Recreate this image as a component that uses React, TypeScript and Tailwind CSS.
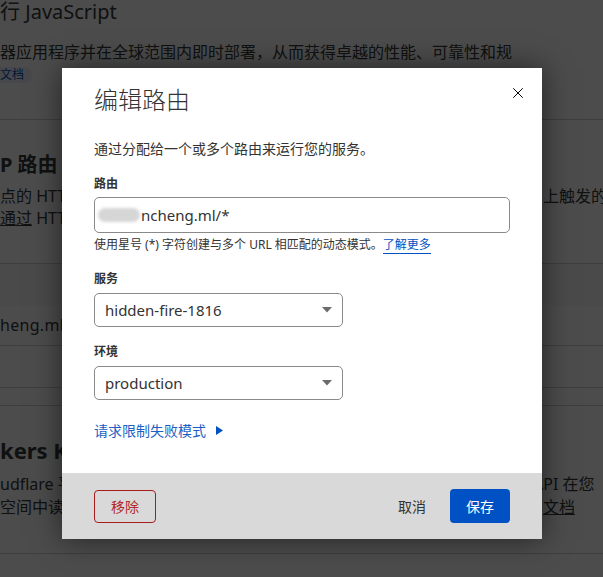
import { X } from "lucide-react";

const font = { fontFamily: '"Noto Sans", "Noto Sans CJK SC", sans-serif' };

function BgRow({
  h,
  left,
  right,
  rightW = "w-[60px]",
  className = "",
}: {
  h: string;
  left?: React.ReactNode;
  right?: React.ReactNode;
  rightW?: string;
  className?: string;
}) {
  return (
    <div className={`flex items-center whitespace-nowrap ${h} ${className}`}>
      <div className="min-w-0 flex-1 overflow-hidden">{left}</div>
      {right && <div className={`${rightW} shrink-0 overflow-hidden`}>{right}</div>}
    </div>
  );
}

function Background() {
  return (
    <div className="flex flex-col text-[16px] text-[#36393a]">
      <BgRow h="h-[24px]" left={<span className="text-[20px]">行 JavaScript</span>} />
      <div className="h-[16px]" />
      <BgRow h="h-[24px]" left={<span>器应用程序并在全球范围内即时部署，从而获得卓越的性能、可靠性和规</span>} />
      <div className="h-[3px]" />
      <div className="flex h-[16px]">
        <span className="rounded-r-full bg-[#eef2fa] pr-[8px] text-[12px] leading-[16px] text-[#0051c3]">文档</span>
      </div>
      <div className="h-[36px]" />
      <div className="border-t border-[#cfcfcf]" />
      <div className="h-[33px]" />
      <BgRow h="h-[24px]" left={<span className="text-[20px] font-bold">P 路由</span>} />
      <div className="h-[8px]" />
      <BgRow h="h-[22px]" left={<span>点的 HTTP</span>} right={<span>上触发的</span>} />
      <BgRow h="h-[22px]" left={<span><span className="underline">通过</span> HTTP</span>} />
      <div className="h-[34px]" />
      <div className="border-t border-[#cfcfcf]" />
      <div className="h-[41px] bg-[#f9f9f9]" />
      <BgRow h="h-[40px]" left={<span className="tracking-[0.3px]">heng.ml/</span>} />
      <div className="border-t border-[#cfcfcf]" />
      <div className="h-[41px]" />
      <div className="border-t border-[#cfcfcf]" />
      <div className="h-[17px]" />
      <div className="border-t border-[#cfcfcf]" />
      <div className="h-[30px]" />
      <BgRow h="h-[28px]" left={<span className="text-[22px] font-bold">kers KV</span>} />
      <div className="h-[9px]" />
      <BgRow
        h="h-[22px]"
        left={<span>udflare 平</span>}
        right={<span>API 在您</span>}
        rightW="w-[70px]"
      />
      <BgRow
        h="h-[24px]"
        left={<span>空间中读</span>}
        right={<span className="underline">文档</span>}
      />
      <div className="h-[34px]" />
      <div className="border-t border-[#cfcfcf]" />
    </div>
  );
}

function Select({ value, w }: { value: string; w: string }) {
  return (
    <div
      className={`mt-[6px] flex h-[34px] ${w} items-center justify-between rounded-[5px] border border-[#8a8a8a] pl-[10px] pr-[10px]`}
    >
      <span className="text-[15px] text-[#333]">{value}</span>
      <svg width="10" height="6" viewBox="0 0 10 6">
        <path d="M0 0h10L5 5.5z" fill="#6b6b6b" />
      </svg>
    </div>
  );
}

function Label({ children, mt }: { children: React.ReactNode; mt: string }) {
  return <div className={`${mt} text-[12px] font-semibold leading-[16px] text-[#333]`}>{children}</div>;
}

function Modal() {
  return (
    <div className="relative flex h-[471px] w-[480px] flex-col bg-white shadow-[0_0_28px_rgba(0,0,0,0.55)]">
      <button type="button" className="absolute right-[15px] top-[16px] text-black">
        <X className="h-[18px] w-[18px]" strokeWidth={1.3} />
      </button>
      <div className="flex-1 px-[32px] pt-[16px]">
        <div className="text-[24px] font-light leading-[32px] text-[#333]">编辑路由</div>
        <div className="mt-[23px] text-[14px] leading-[20px] text-[#333]">通过分配给一个或多个路由来运行您的服务。</div>
        <Label mt="mt-[17px]">路由</Label>
        <div className="mt-[5px] flex h-[36px] w-[416px] items-center rounded-[5px] border border-[#8a8a8a] pl-[3px]">
          <span className="mr-[1px] h-[14px] w-[42px] rounded-full bg-[#d6d6d6] blur-[1.5px]" />
          <span className="text-[15px] text-[#333]">ncheng.ml/*</span>
        </div>
        <div className="mt-[4px] flex h-[18px] items-start text-[12px] leading-[16px] text-[#333]">
          <span>使用星号 (*) 字符创建与多个 URL 相匹配的动态模式。</span>
          <span className="border-b border-[#0051c3] text-[#0051c3]">了解更多</span>
        </div>
        <Label mt="mt-[16px]">服务</Label>
        <Select value="hidden-fire-1816" w="w-[249px]" />
        <Label mt="mt-[17px]">环境</Label>
        <Select value="production" w="w-[249px]" />
        <div className="mt-[20px] flex h-[20px] items-center gap-[10px] text-[14px] text-[#1a5fc4]">
          <span>请求限制失败模式</span>
          <svg width="7" height="9" viewBox="0 0 7 9">
            <path d="M0 0l7 4.5L0 9z" fill="#0051c3" />
          </svg>
        </div>
      </div>
      <div className="flex h-[66px] items-center bg-[#d9d9d9] px-[32px]">
        <button
          type="button"
          className="h-[33px] w-[62px] rounded-[4px] border border-[#a61c1c] text-[14px] text-[#b22a2a]"
        >
          移除
        </button>
        <button type="button" className="ml-auto mr-[24px] text-[14px] text-[#333]">
          取消
        </button>
        <button
          type="button"
          className="h-[34px] w-[60px] rounded-[4px] bg-[#0051c3] text-[14px] text-white"
        >
          保存
        </button>
      </div>
    </div>
  );
}

export default function App() {
  return (
    <div className="relative h-[577px] w-full overflow-hidden bg-white" style={font}>
      <Background />
      <div className="absolute inset-0 bg-black/70" />
      <div className="absolute inset-0 flex justify-center pl-[1px] pt-[68px]">
        <Modal />
      </div>
    </div>
  );
}
